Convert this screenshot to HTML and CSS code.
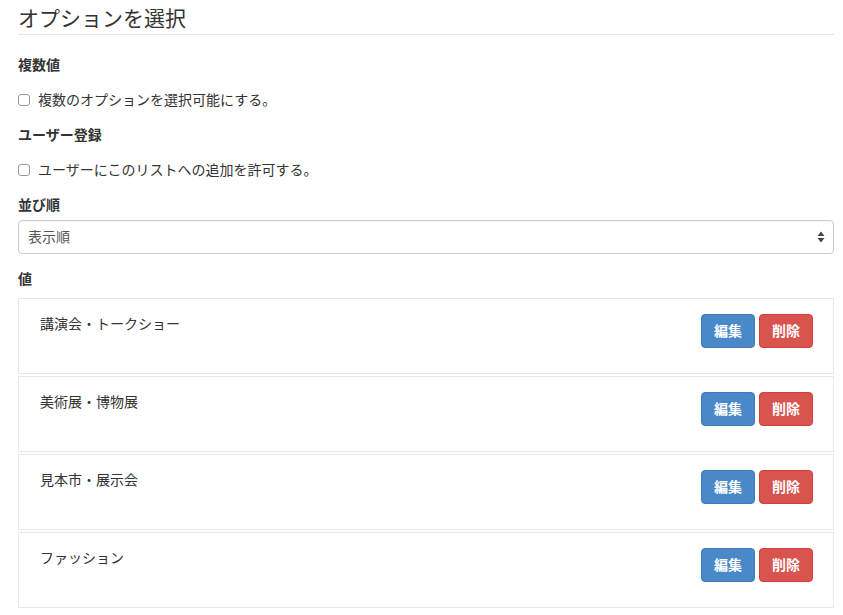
FILE: index.html
```html
<!DOCTYPE html>
<html lang="ja">
<head>
<meta charset="utf-8">
<title>オプションを選択</title>
<link rel="stylesheet" href="styles.css">
</head>
<body>
<form class="page">
  <h1 class="legend">オプションを選択</h1>

  <div class="form-group">
    <div class="label">複数値</div>
    <label class="checkbox"><span class="box"></span>複数のオプションを選択可能にする。</label>
  </div>

  <div class="form-group">
    <div class="label">ユーザー登録</div>
    <label class="checkbox"><span class="box"></span>ユーザーにこのリストへの追加を許可する。</label>
  </div>

  <div class="form-group">
    <div class="label">並び順</div>
    <div class="select">
      <span>表示順</span>
      <svg class="caret" width="8" height="12" viewBox="0 0 8 12"><path d="M4 0.5 L7.5 5 H0.5 Z M4 11.5 L7.5 7 H0.5 Z" fill="#444"/></svg>
    </div>
  </div>

  <div class="form-group values">
    <div class="label">値</div>
    <div class="item">
      <span class="item-name">講演会・トークショー</span>
      <div class="actions"><button type="button" class="btn btn-edit">編集</button><button type="button" class="btn btn-del">削除</button></div>
    </div>
    <div class="item">
      <span class="item-name">美術展・博物展</span>
      <div class="actions"><button type="button" class="btn btn-edit">編集</button><button type="button" class="btn btn-del">削除</button></div>
    </div>
    <div class="item">
      <span class="item-name">見本市・展示会</span>
      <div class="actions"><button type="button" class="btn btn-edit">編集</button><button type="button" class="btn btn-del">削除</button></div>
    </div>
    <div class="item">
      <span class="item-name">ファッション</span>
      <div class="actions"><button type="button" class="btn btn-edit">編集</button><button type="button" class="btn btn-del">削除</button></div>
    </div>
  </div>
</form>
</body>
</html>
```

FILE: styles.css
```css
* { box-sizing: border-box; }
html, body { margin: 0; background: #fff; }
body {
  font-family: "Liberation Sans", "Noto Sans CJK JP", sans-serif;
  font-size: 14px;
  line-height: 20px;
  color: #333;
}
.page {
  padding: 4px 9px 0 18px;
}
.legend {
  margin: 0 0 20px;
  font-size: 21px;
  font-weight: normal;
  line-height: 30px;
  color: #333;
  border-bottom: 1px solid #e5e5e5;
}
.form-group { margin-bottom: 15px; }
.label {
  font-weight: bold;
  margin-bottom: 5px;
  line-height: 20px;
}
.checkbox {
  display: flex;
  align-items: center;
  margin-top: 15px;
  margin-bottom: 15px;
  line-height: 20px;
}
.box {
  width: 12px;
  height: 12px;
  border: 1px solid #9a9a9a;
  border-radius: 3px;
  margin-right: 8px;
  background: #fff;
}
.select {
  display: flex;
  align-items: center;
  justify-content: space-between;
  height: 34px;
  padding: 0 8px 0 9px;
  border: 1px solid #ccc;
  border-radius: 4px;
  color: #555;
  box-shadow: inset 0 1px 1px rgba(0,0,0,0.04);
}
.values .label { margin-bottom: 9px; }
.item {
  display: flex;
  justify-content: space-between;
  align-items: flex-start;
  padding: 15px 20px 25px 21px;
  border: 1px solid #e8e8e8;
  margin-bottom: 2px;
}
.item-name { line-height: 20px; }
.actions { display: flex; gap: 4px; }
.btn {
  font-family: inherit;
  font-size: 14px;
  font-weight: bold;
  line-height: 20px;
  padding: 6px 12px;
  border-radius: 4px;
  color: #fff;
  border: 1px solid transparent;
  cursor: pointer;
}
.btn-edit { background: #4a89c9; border-color: #3f7db8; }
.btn-del { background: #d9534f; border-color: #d43f3a; }
```
